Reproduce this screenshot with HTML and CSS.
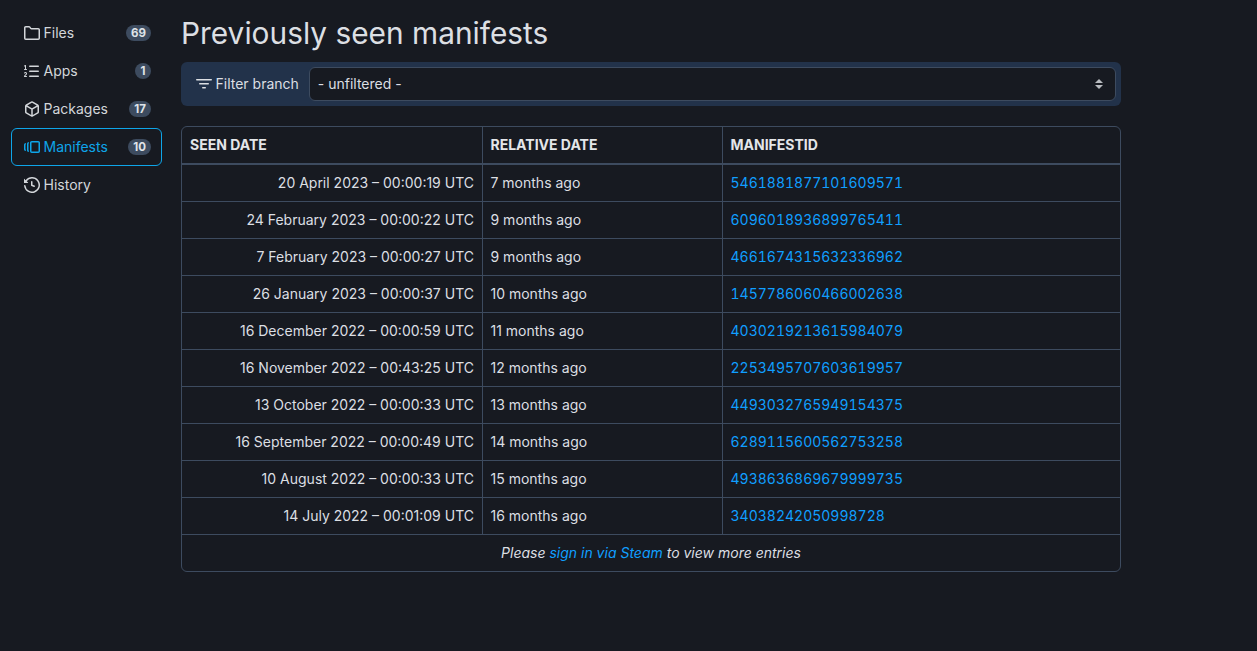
FILE: index.html
```html
<!DOCTYPE html>
<html lang="en">
<head>
<meta charset="utf-8">
<title>Previously seen manifests</title>
<link rel="stylesheet" href="styles.css">
</head>
<body>
<div class="layout">
  <nav class="side">
    <a class="nav-item"><svg class="ico" viewBox="0 0 16 16"><path d="M0 2.75C0 1.784.784 1 1.75 1H5c.55 0 1.07.26 1.4.7l.9 1.2a.25.25 0 0 0 .2.1h6.75c.966 0 1.75.784 1.75 1.75v8.5A1.75 1.75 0 0 1 14.25 15H1.75A1.75 1.75 0 0 1 0 13.25Zm1.75-.25a.25.25 0 0 0-.25.25v10.5c0 .138.112.25.25.25h12.5a.25.25 0 0 0 .25-.25v-8.5a.25.25 0 0 0-.25-.25H7.5c-.55 0-1.07-.26-1.4-.7l-.9-1.2a.25.25 0 0 0-.2-.1Z"/></svg><span class="nav-label">Files</span><span class="badge">69</span></a>
    <a class="nav-item"><svg class="ico" viewBox="0 0 16 16"><path d="M5 3.25a.75.75 0 0 1 .75-.75h8.5a.75.75 0 0 1 0 1.5h-8.5A.75.75 0 0 1 5 3.25Zm0 5a.75.75 0 0 1 .75-.75h8.5a.75.75 0 0 1 0 1.5h-8.5A.75.75 0 0 1 5 8.25Zm0 5a.75.75 0 0 1 .75-.75h8.5a.75.75 0 0 1 0 1.5h-8.5a.75.75 0 0 1-.75-.75ZM.924 10.32a.5.5 0 0 1-.851-.525l.001-.001.001-.002.002-.004.007-.011c.097-.144.215-.273.348-.384.228-.19.588-.392 1.068-.392.468 0 .858.181 1.126.484.259.294.377.673.377 1.038 0 .987-.686 1.495-1.156 1.845l-.047.035c-.303.225-.522.4-.654.597h1.357a.5.5 0 0 1 0 1H.5a.5.5 0 0 1-.5-.5c0-1.005.692-1.52 1.167-1.875l.035-.025c.531-.396.8-.625.8-1.078a.57.57 0 0 0-.128-.376C1.806 10.068 1.695 10 1.5 10a.658.658 0 0 0-.429.163.835.835 0 0 0-.144.153ZM2.003 2.5V6h.503a.5.5 0 0 1 0 1H.5a.5.5 0 0 1 0-1h.503V3.308l-.28.14a.5.5 0 0 1-.446-.895l1.003-.5a.5.5 0 0 1 .723.447Z"/></svg><span class="nav-label">Apps</span><span class="badge">1</span></a>
    <a class="nav-item"><svg class="ico" viewBox="0 0 16 16"><path d="m8.878.392 5.25 3.045c.54.314.872.89.872 1.514v6.098a1.75 1.75 0 0 1-.872 1.514l-5.25 3.045a1.75 1.75 0 0 1-1.756 0l-5.25-3.045A1.75 1.75 0 0 1 1 11.049V4.951c0-.624.332-1.201.872-1.514L7.122.392a1.75 1.75 0 0 1 1.756 0ZM7.875 1.69l-4.63 2.685L8 7.133l4.755-2.758-4.63-2.685a.248.248 0 0 0-.25 0ZM2.5 5.677v5.372c0 .09.047.171.125.216l4.625 2.683V8.432Zm6.25 8.271 4.625-2.683a.25.25 0 0 0 .125-.216V5.677L8.75 8.432Z"/></svg><span class="nav-label">Packages</span><span class="badge">17</span></a>
    <a class="nav-item active"><svg class="ico" viewBox="0 0 16 16"><path d="M7.75 14A1.75 1.75 0 0 1 6 12.25v-8.5C6 2.784 6.784 2 7.75 2h6.5c.966 0 1.75.784 1.75 1.75v8.5A1.75 1.75 0 0 1 14.25 14Zm-.25-1.75c0 .138.112.25.25.25h6.5a.25.25 0 0 0 .25-.25v-8.5a.25.25 0 0 0-.25-.25h-6.5a.25.25 0 0 0-.25.25ZM4.9 3.508a.75.75 0 0 1-.274 1.025.249.249 0 0 0-.126.217v6.5c0 .09.048.173.126.217a.75.75 0 0 1-.752 1.298A1.75 1.75 0 0 1 3 11.25v-6.5c0-.649.353-1.214.874-1.516a.75.75 0 0 1 1.025.274ZM1.625 5.533h.001a.249.249 0 0 0-.126.217v4.5c0 .09.048.173.126.217a.75.75 0 0 1-.752 1.298A1.748 1.748 0 0 1 0 10.25v-4.5a1.748 1.748 0 0 1 .873-1.515.75.75 0 0 1 .752 1.298Z"/></svg><span class="nav-label">Manifests</span><span class="badge">10</span></a>
    <a class="nav-item"><svg class="ico" viewBox="0 0 16 16"><path d="m.427 1.927 1.215 1.215a8.002 8.002 0 1 1-1.6 5.685.75.75 0 1 1 1.493-.154 6.5 6.5 0 1 0 1.18-4.458l1.358 1.358A.25.25 0 0 1 3.896 6H.25A.25.25 0 0 1 0 5.75V2.104a.25.25 0 0 1 .427-.177ZM7.75 4a.75.75 0 0 1 .75.75v2.992l2.028.812a.75.75 0 0 1-.557 1.392l-2.5-1A.751.751 0 0 1 7 8.25v-3.5A.75.75 0 0 1 7.75 4Z"/></svg><span class="nav-label">History</span></a>
  </nav>
  <main class="main">
    <h1 class="title">Previously seen manifests</h1>
    <div class="filter">
      <label class="filter-label"><svg class="ico" viewBox="0 0 16 16"><path d="M.75 3h14.5a.75.75 0 0 1 0 1.5H.75a.75.75 0 0 1 0-1.5ZM3 7.75A.75.75 0 0 1 3.75 7h8.5a.75.75 0 0 1 0 1.5h-8.5A.75.75 0 0 1 3 7.75Zm3 4a.75.75 0 0 1 .75-.75h2.5a.75.75 0 0 1 0 1.5h-2.5a.75.75 0 0 1-.75-.75Z"/></svg>Filter branch</label>
      <div class="select"><span>- unfiltered -</span><svg class="updown" viewBox="0 0 8 10"><path d="M4 0 8 4H0ZM4 10 0 6h8Z"/></svg></div>
    </div>
    <div class="table-box">
      <table class="tbl">
        <colgroup><col class="c1"><col class="c2"><col class="c3"></colgroup>
        <thead><tr><th>SEEN DATE</th><th>RELATIVE DATE</th><th>MANIFESTID</th></tr></thead>
        <tbody>
          <tr><td class="date">20 April 2023 – 00:00:19 UTC</td><td>7 months ago</td><td><a class="id">5461881877101609571</a></td></tr>
          <tr><td class="date">24 February 2023 – 00:00:22 UTC</td><td>9 months ago</td><td><a class="id">6096018936899765411</a></td></tr>
          <tr><td class="date">7 February 2023 – 00:00:27 UTC</td><td>9 months ago</td><td><a class="id">4661674315632336962</a></td></tr>
          <tr><td class="date">26 January 2023 – 00:00:37 UTC</td><td>10 months ago</td><td><a class="id">1457786060466002638</a></td></tr>
          <tr><td class="date">16 December 2022 – 00:00:59 UTC</td><td>11 months ago</td><td><a class="id">4030219213615984079</a></td></tr>
          <tr><td class="date">16 November 2022 – 00:43:25 UTC</td><td>12 months ago</td><td><a class="id">2253495707603619957</a></td></tr>
          <tr><td class="date">13 October 2022 – 00:00:33 UTC</td><td>13 months ago</td><td><a class="id">4493032765949154375</a></td></tr>
          <tr><td class="date">16 September 2022 – 00:00:49 UTC</td><td>14 months ago</td><td><a class="id">6289115600562753258</a></td></tr>
          <tr><td class="date">10 August 2022 – 00:00:33 UTC</td><td>15 months ago</td><td><a class="id">4938636869679999735</a></td></tr>
          <tr><td class="date">14 July 2022 – 00:01:09 UTC</td><td>16 months ago</td><td><a class="id">34038242050998728</a></td></tr>
        </tbody>
        <tfoot><tr><td colspan="3" class="foot">Please <a class="link">sign in via Steam</a> to view more entries</td></tr></tfoot>
      </table>
    </div>
  </main>
</div>
</body>
</html>
```

FILE: styles.css
```css
* { box-sizing: border-box; }
html, body { margin: 0; height: 100%; }
body {
  background: #171a21;
  color: #dcdfe3;
  font: 14px/20px Inter, "Liberation Sans", sans-serif;
  overflow: hidden;
}
.layout { display: flex; align-items: flex-start; gap: 19px; padding: 14px 0 0 11px; }
.side { width: 151px; flex: none; display: flex; flex-direction: column; }
.nav-item {
  display: flex; align-items: center; height: 38px;
  padding: 0 10px 0 12px;
  border: 1px solid transparent; border-radius: 6px;
  color: #d3d6da;
}
.nav-item .ico { margin-right: 3.5px; }
.nav-label { flex: 1; }
.ico { width: 16px; height: 16px; fill: currentColor; flex: none; }
.nav-item.active { border-color: #0ea5e9; color: #0ea5e9; }
.badge {
  background: #3d4b5f; color: #dfe3e8;
  font-size: 11.5px; font-weight: 700; line-height: 16px;
  padding: 0 5px; border-radius: 8px; min-width: 16px; text-align: center;
}
.main { width: 940px; flex: none; }
.title { margin: 0 0 10px; font-size: 29.85px; font-weight: 400; line-height: 38px; color: #dcdfe3; }
.filter {
  display: flex; align-items: center; gap: 10px;
  height: 44px; padding: 5px;
  background: #22324a; border-radius: 6px;
}
.filter-label { display: flex; align-items: center; gap: 3.5px; padding-left: 10px; white-space: nowrap; }
.select {
  flex: 1; height: 34px; display: flex; align-items: center; justify-content: space-between;
  padding: 0 12px 0 8px;
  background: #171a21; border: 1px solid #3d4b5f; border-radius: 6px;
}
.updown { width: 8px; height: 10px; fill: #b8bbc0; }
.table-box {
  margin-top: 20px; border: 1px solid #3d4b5f; border-radius: 6px; overflow: hidden;
}
.tbl { width: 100%; border-collapse: separate; border-spacing: 0; table-layout: fixed; }
.c1 { width: 301px; }
.c2 { width: 240px; }
.tbl th, .tbl td {
  border-right: 1px solid #3d4b5f; border-bottom: 1px solid #3d4b5f;
  padding: 0 8px 0 7.5px; height: 37px; text-align: left;
}
.tbl tr > :first-child { padding-left: 8px; }
.tbl tr > :last-child { border-right: 0; }
.tbl thead th { border-bottom-width: 2px; font-weight: 700; height: 38px; color: #e4e6e9; }
.tbl tfoot td { border-bottom: 0; height: 36px; }
.tbl td.date { text-align: right; }
.id { color: #109fff; font-variant-numeric: tabular-nums; }
.link { color: #109fff; }
.tbl td.foot { text-align: center; font-style: italic; }
```
